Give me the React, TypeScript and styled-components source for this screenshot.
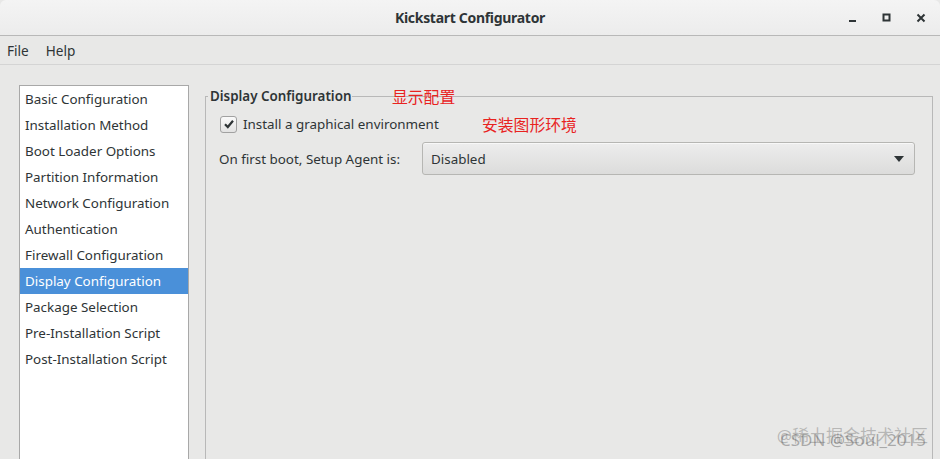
import * as React from 'react';
import styled, { createGlobalStyle } from 'styled-components';

const GlobalStyle = createGlobalStyle`
  html, body {
    margin: 0;
    padding: 0;
    height: 100%;
    overflow: hidden;
  }
  body {
    font-family: "Noto Sans", "DejaVu Sans", sans-serif;
    font-size: 13.4px;
    color: #2e3436;
    background: #e8e8e7;
  }
`;

const Window = styled.div`
  width: 940px;
  height: 459px;
  display: flex;
  flex-direction: column;
  background: #e8e8e7;
  position: relative;
  overflow: hidden;
`;

const TitleBar = styled.div`
  height: 35px;
  flex: none;
  display: flex;
  align-items: center;
  justify-content: center;
  position: relative;
  background: linear-gradient(#f4f4f4, #ececec);
  border-bottom: 1px solid #b8b8b8;
  border-radius: 6px 6px 0 0;
`;

const Title = styled.div`
  font-size: 14px;
  font-weight: 700;
  color: #2e3436;
  letter-spacing: -0.3px;
`;

const WindowButtons = styled.div`
  position: absolute;
  right: 10px;
  top: 0;
  height: 35px;
  display: flex;
  align-items: center;
  gap: 16px;
`;

const WinButton = styled.div`
  width: 18px;
  height: 18px;
  display: flex;
  align-items: center;
  justify-content: center;
`;

const MenuBar = styled.div`
  height: 28px;
  flex: none;
  display: flex;
  align-items: center;
  padding-left: 7px;
  gap: 17px;
  background: #e8e8e7;
  border-bottom: 1px solid #d4d4d4;
`;

const MenuItem = styled.span`
  font-size: 13.6px;
  color: #2e3436;
`;

const Body = styled.div`
  flex: 1;
  display: flex;
  padding: 20px 0 0 19px;
  gap: 16px;
  min-height: 0;
`;

const SideList = styled.ul`
  width: 168px;
  flex: none;
  margin: 0;
  padding: 0;
  list-style: none;
  background: #ffffff;
  border: 1px solid #a8a8a8;
  border-bottom: none;
`;

const SideItem = styled.li<{ $active?: boolean }>`
  height: 26px;
  line-height: 26px;
  padding-left: 5px;
  white-space: nowrap;
  color: ${(p) => (p.$active ? '#ffffff' : '#2e3436')};
  background: ${(p) => (p.$active ? '#4a90d9' : 'transparent')};
`;

const Frame = styled.fieldset`
  width: 713px;
  flex: none;
  margin: 0;
  margin-top: 2px;
  padding: 0 0 0 13px;
  border: 1px solid #b8b8b8;
  border-bottom: none;
  border-radius: 0;
  min-width: 0;
`;

const Legend = styled.legend`
  padding: 0 1px 0 2px;
  margin-left: -11px;
  font-weight: 600;
  color: #2e3436;
  line-height: 18px;
`;

const Row = styled.div`
  display: flex;
  align-items: center;
`;

const CheckRow = styled(Row)`
  height: 26px;
  margin-top: 6px;
  margin-left: 1px;
  gap: 6px;
`;

const CheckBox = styled.div`
  width: 15px;
  height: 15px;
  border: 1px solid #a1a1a1;
  border-radius: 3px;
  background: linear-gradient(#fafafa, #e2e2e2);
  display: flex;
  align-items: center;
  justify-content: center;
`;

const AgentRow = styled(Row)`
  margin-top: 5px;
  gap: 22px;
`;

const Label = styled.span`
  color: #2e3436;
  white-space: nowrap;
`;

const Combo = styled.div`
  width: 493px;
  height: 33px;
  box-sizing: border-box;
  display: flex;
  align-items: center;
  justify-content: space-between;
  padding: 0 10px 0 8px;
  border: 1px solid #b6b6b3;
  border-radius: 3px;
  background: linear-gradient(#ededed, #dcdcdb);
  box-shadow: inset 0 1px #f8f8f8;
`;

const Note = styled.span`
  position: absolute;
  font-family: "Noto Sans CJK SC", sans-serif;
  font-size: 15.8px;
  line-height: 20px;
  color: #e8231f;
  white-space: nowrap;
`;

const Watermark = styled.div`
  position: absolute;
  right: 14px;
  bottom: 8px;
  font-family: "Noto Sans", "Noto Sans CJK SC", sans-serif;
  font-size: 17px;
  color: rgba(90, 90, 90, 0.45);
  white-space: nowrap;
  pointer-events: none;
`;

const WatermarkTop = styled(Watermark)`
  right: 12px;
  bottom: 12px;
  color: rgba(90, 90, 90, 0.35);
`;

const sections = [
  'Basic Configuration',
  'Installation Method',
  'Boot Loader Options',
  'Partition Information',
  'Network Configuration',
  'Authentication',
  'Firewall Configuration',
  'Display Configuration',
  'Package Selection',
  'Pre-Installation Script',
  'Post-Installation Script',
];

const App = () => {
  return (
    <Window>
      <GlobalStyle />
      <TitleBar>
        <Title>Kickstart Configurator</Title>
        <WindowButtons>
          <WinButton>
            <svg width="10" height="10" viewBox="0 0 10 10">
              <rect x="1" y="7" width="7" height="2" fill="#2e3436" />
            </svg>
          </WinButton>
          <WinButton>
            <svg width="10" height="10" viewBox="0 0 10 10">
              <rect x="1.5" y="1.5" width="6" height="6" fill="none" stroke="#2e3436" strokeWidth="2" />
            </svg>
          </WinButton>
          <WinButton>
            <svg width="10" height="10" viewBox="0 0 10 10">
              <path d="M1.5 1.5 L8.5 8.5 M8.5 1.5 L1.5 8.5" stroke="#2e3436" strokeWidth="2" />
            </svg>
          </WinButton>
        </WindowButtons>
      </TitleBar>
      <MenuBar>
        <MenuItem>File</MenuItem>
        <MenuItem>Help</MenuItem>
      </MenuBar>
      <Body>
        <SideList>
          {sections.map((s) => (
            <SideItem key={s} $active={s === 'Display Configuration'}>
              {s}
            </SideItem>
          ))}
        </SideList>
        <Frame>
          <Legend>Display Configuration</Legend>
          <CheckRow>
            <CheckBox>
              <svg width="12" height="12" viewBox="0 0 12 12">
                <path d="M2 6.2 L4.8 9 L10 2.8" fill="none" stroke="#2e3436" strokeWidth="2.2" />
              </svg>
            </CheckBox>
            <Label>Install a graphical environment</Label>
          </CheckRow>
          <AgentRow>
            <Label>On first boot, Setup Agent is:</Label>
            <Combo>
              <Label>Disabled</Label>
              <svg width="10" height="6" viewBox="0 0 10 6">
                <path d="M0 0 L10 0 L5 6 Z" fill="#2e3436" />
              </svg>
            </Combo>
          </AgentRow>
        </Frame>
      </Body>
      <Note style={{ left: 392, top: 87 }}>显示配置</Note>
      <Note style={{ left: 482, top: 115 }}>安装图形环境</Note>
      <Watermark>CSDN @Soul_2015</Watermark>
      <WatermarkTop>@稀土掘金技术社区</WatermarkTop>
    </Window>
  );
};

export default App;
